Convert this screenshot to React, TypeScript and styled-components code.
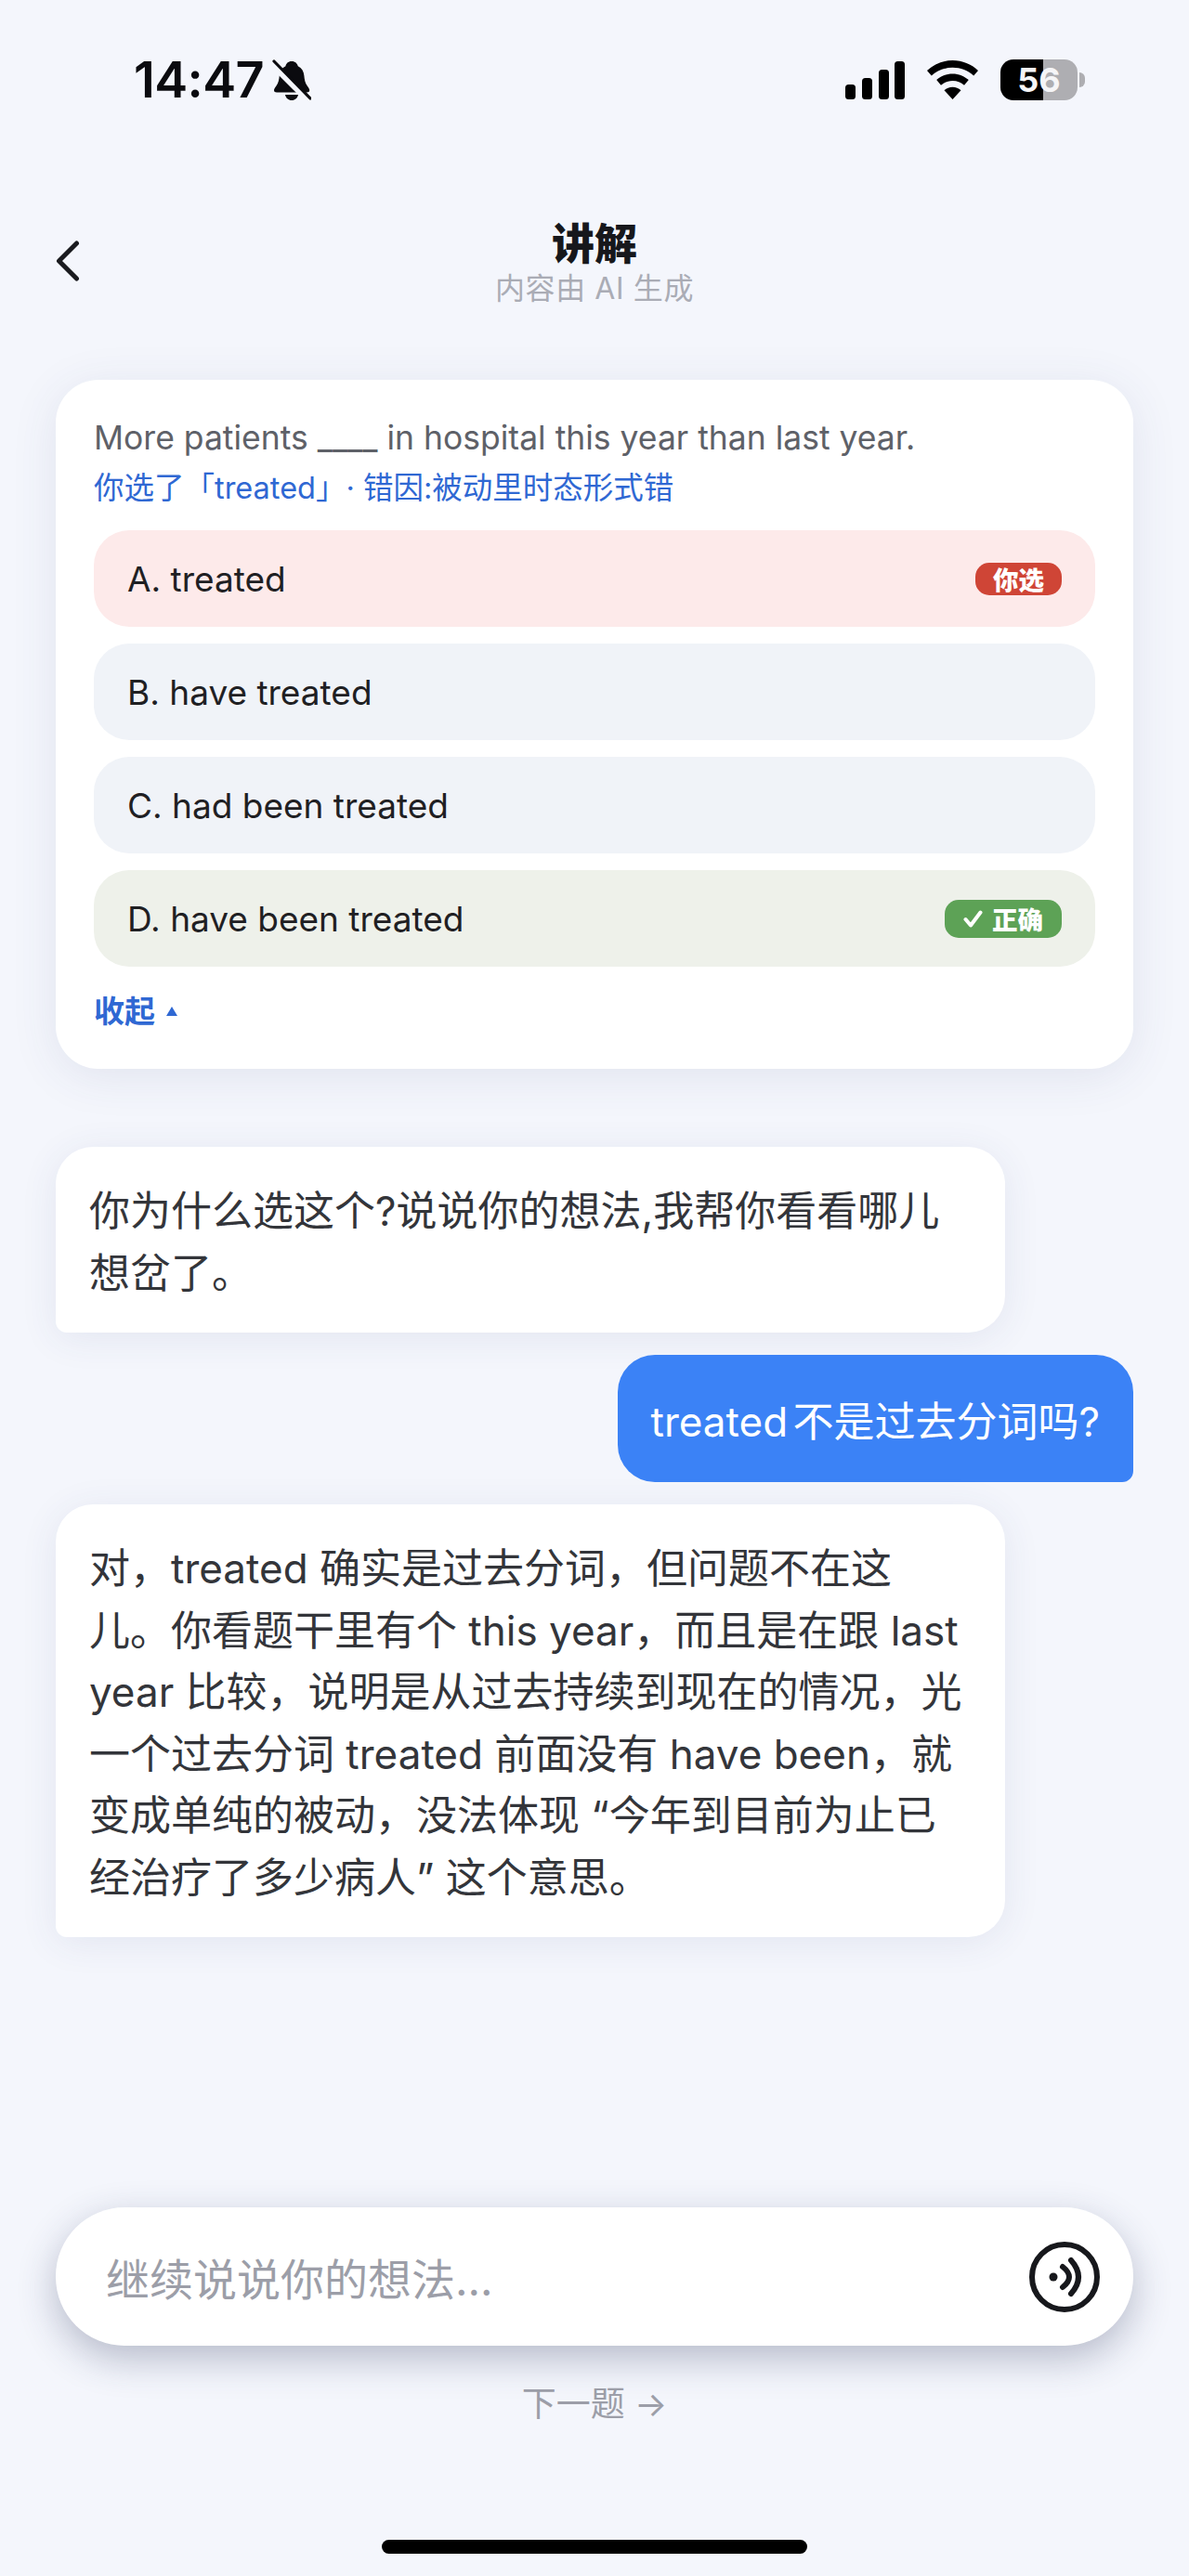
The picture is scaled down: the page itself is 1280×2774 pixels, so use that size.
import React from "react";
import styled, { createGlobalStyle } from "styled-components";

const Global = createGlobalStyle`
  html, body { margin: 0; padding: 0; background: #f4f6fc; }
  body { font-family: Inter, "Noto Sans CJK SC", sans-serif; -webkit-font-smoothing: antialiased; }
`;

const Page = styled.div`
  width: 1280px;
  height: 2774px;
  background: #f4f6fc;
  display: flex;
  flex-direction: column;
  overflow: hidden;
`;

const StatusBar = styled.div`
  height: 44px;
  margin-top: 64px;
  padding: 0 112px 0 144px;
  display: flex;
  align-items: center;
  justify-content: space-between;
`;
const StatusLeft = styled.div`
  display: flex;
  align-items: center;
  gap: 9px;
`;
const Time = styled.span`
  font-family: Inter, sans-serif;
  font-size: 54px;
  font-weight: 600;
  line-height: 44px;
  letter-spacing: -0.6px;
  color: #0b0b0f;
`;
const StatusRight = styled.div`
  display: flex;
  align-items: center;
  gap: 23px;
`;
const BatteryWrap = styled.div`
  display: flex;
  align-items: center;
  gap: 2px;
`;
const BatteryBody = styled.div<{ $level: number }>`
  width: 83px;
  height: 44px;
  border-radius: 14px;
  background: linear-gradient(90deg, #000 ${(p) => p.$level}%, #aeaeb2 ${(p) => p.$level}%);
  color: #f5f5f7;
  font-family: Inter, sans-serif;
  font-size: 36px;
  font-weight: 700;
  display: flex;
  align-items: center;
  justify-content: center;
`;
const BatteryNub = styled.div`
  width: 6px;
  height: 16px;
  background: #aeaeb2;
  border-radius: 0 6px 6px 0;
`;

const Header = styled.header`
  margin-top: 124px;
  padding: 0 60px;
  display: grid;
  grid-template-columns: 1fr auto 1fr;
  align-items: center;
`;
const BackButton = styled.div`
  display: flex;
  align-items: center;
`;
const TitleBlock = styled.div`
  display: flex;
  flex-direction: column;
  align-items: center;
`;
const Title = styled.h1`
  margin: 0;
  font-size: 46px;
  font-weight: 900;
  line-height: 60px;
  color: #17181c;
`;
const Subtitle = styled.div`
  font-size: 32px;
  line-height: 38px;
  color: #aaacb5;
  letter-spacing: 0.6px;
`;

const Card = styled.section`
  margin: 79px 60px 0;
  padding: 40px 41px 0;
  height: 742px;
  box-sizing: border-box;
  background: #fff;
  border-radius: 46px;
  box-shadow: 0 8px 50px rgba(60, 70, 120, 0.1);
`;
const Question = styled.div`
  font-size: 35.5px;
  line-height: 46px;
  color: #5e6168;
`;
const Reason = styled.div`
  margin-top: 8px;
  font-size: 32.5px;
  line-height: 46px;
  color: #2f68d3;
  white-space: nowrap;
  text-spacing-trim: space-all;
`;
const Options = styled.div`
  margin-top: 22px;
  display: flex;
  flex-direction: column;
  gap: 18px;
`;
const Option = styled.div<{ $bg: string }>`
  height: 104px;
  padding: 0 36px;
  border-radius: 38px;
  background: ${(p) => p.$bg};
  display: flex;
  align-items: center;
  justify-content: space-between;
  font-size: 37px;
  color: #1f2023;
`;
const Badge = styled.span<{ $bg: string; $height: number; $pad: number }>`
  height: ${(p) => p.$height}px;
  padding: 0 ${(p) => p.$pad}px;
  border-radius: 15px;
  background: ${(p) => p.$bg};
  color: #fff;
  font-size: 27.5px;
  font-weight: 900;
  display: flex;
  align-items: center;
  gap: 10px;
`;
const Collapse = styled.div`
  margin-top: 26px;
  display: flex;
  align-items: center;
  gap: 12px;
  font-size: 33px;
  line-height: 44px;
  font-weight: 700;
  color: #2f68d3;
`;

const Chat = styled.div`
  margin-top: 84px;
  padding: 0 60px;
  display: flex;
  flex-direction: column;
  gap: 24px;
`;
const BotBubble = styled.div`
  box-sizing: border-box;
  width: 1022px;
  padding: 36px 36px 31px;
  background: #fff;
  border-radius: 40px 40px 40px 12px;
  box-shadow: 0 6px 40px rgba(60, 70, 120, 0.09);
  font-size: 44px;
  line-height: 66.5px;
  color: #33353a;
`;
const UserBubble = styled.div`
  align-self: flex-end;
  box-sizing: border-box;
  height: 137px;
  padding: 0 36px;
  background: #3b82f6;
  border-radius: 40px 40px 12px 40px;
  font-size: 44px;
  word-spacing: -7px;
  color: #fff;
  display: flex;
  align-items: center;
`;

const Bottom = styled.div`
  margin-top: auto;
  padding: 0 60px;
  display: flex;
  flex-direction: column;
  align-items: center;
`;
const InputBar = styled.div`
  align-self: stretch;
  height: 149px;
  box-sizing: border-box;
  padding: 0 36px 0 54px;
  background: #fff;
  border-radius: 74px;
  box-shadow: 0 14px 40px rgba(40, 50, 90, 0.3);
  display: flex;
  align-items: center;
  justify-content: space-between;
`;
const Placeholder = styled.span`
  font-size: 47px;
  color: #9c9ea8;
`;
const NextLink = styled.div`
  margin-top: 38px;
  font-size: 37px;
  line-height: 50px;
  color: #9c9ea8;
  display: flex;
  align-items: center;
  gap: 10px;
`;
const HomeBar = styled.div`
  margin-top: 121px;
  margin-bottom: 24px;
  width: 458px;
  height: 15px;
  border-radius: 8px;
  background: #000;
`;

const Wifi = () => (
  <svg width="57" height="42" viewBox="0 0 57 42" fill="#000">
    <path d="M28.5 0C18 0 8.3 4 1 11l4.8 5.6C11.8 11 19.8 7.8 28.5 7.8S45.2 11 51.2 16.6L56 11C48.7 4 39 0 28.5 0Z" />
    <path d="M28.5 14.4c-6.6 0-12.7 2.5-17.3 6.7l4.8 5.6c3.3-3 7.7-4.8 12.5-4.8s9.2 1.8 12.5 4.8l4.8-5.6c-4.6-4.2-10.7-6.7-17.3-6.7Z" />
    <path d="M28.5 28.8c-3.4 0-6.6 1.2-9 3.4L28.5 42l9-9.8c-2.4-2.2-5.6-3.4-9-3.4Z" />
  </svg>
);

const Signal = () => (
  <svg width="64" height="41" viewBox="0 0 64 41" fill="#000">
    <rect x="0" y="25" width="11" height="16" rx="3.5" />
    <rect x="18" y="18" width="11" height="23" rx="3.5" />
    <rect x="36" y="9" width="11" height="32" rx="3.5" />
    <rect x="53" y="0" width="11" height="41" rx="3.5" />
  </svg>
);

const BellOff = () => (
  <svg width="42" height="44" viewBox="0 0 42 44" fill="#0b0b0f">
    <path d="M21 2c4 0 6 2.6 6.8 5.2 4 1.8 6.2 5.4 6.6 10.3.3 3.8 1 7.800 3.400 11 1.600 2.200 2.400 3.400 2.400 4.800 0 1.600-1.200 2.200-3 2.200H5c-1.800 0-3-.6-3-2.200 0-1.400.8-2.600 2.400-4.800 2.400-3.200 3.100-7.200 3.400-11 .4-4.900 2.600-8.500 6.600-10.300C15 4.600 17 2 21 2Z" />
    <path d="M14 38h14c-.6 3.400-3.400 6-7 6s-6.400-2.600-7-6Z" />
    <path d="M1 6 38 43" stroke="#f4f6fc" strokeWidth="7" />
    <path d="M2 2 41 42" stroke="#0b0b0f" strokeWidth="3.200" strokeLinecap="round" />
  </svg>
);

const Back = () => (
  <svg width="26" height="44" viewBox="0 0 26 44" fill="none" stroke="#1a1b1f" strokeWidth="5" strokeLinecap="round" strokeLinejoin="round">
    <path d="M22.500 3 3.500 22l19 19" />
  </svg>
);

const Voice = () => (
  <svg width="76" height="76" viewBox="0 0 76 76" fill="none" stroke="#17181c" strokeWidth="6" strokeLinecap="round">
    <circle cx="38" cy="38" r="35" />
    <circle cx="26" cy="38" r="4.500" fill="#17181c" stroke="none" />
    <path d="M36 27Q50 38 36 49" />
    <path d="M45 20Q61 38 45 56" />
  </svg>
);

const Check = () => (
  <svg width="21" height="19" viewBox="0 0 21 19" fill="none" stroke="#fff" strokeWidth="4" strokeLinecap="round" strokeLinejoin="round">
    <path d="M2.500 10 8 16.500 18.500 2.500" />
  </svg>
);

const Triangle = () => (
  <svg width="12" height="10" viewBox="0 0 12 10" fill="#2f68d3">
    <path d="M6 0 12 10H0Z" />
  </svg>
);

export default function App() {
  return (
    <Page>
      <Global />
      <StatusBar>
        <StatusLeft>
          <Time>14:47</Time>
          <BellOff />
        </StatusLeft>
        <StatusRight>
          <Signal />
          <Wifi />
          <BatteryWrap>
            <BatteryBody $level={56}>56</BatteryBody>
            <BatteryNub />
          </BatteryWrap>
        </StatusRight>
      </StatusBar>
      <Header>
        <BackButton>
          <Back />
        </BackButton>
        <TitleBlock>
          <Title>讲解</Title>
          <Subtitle>内容由 AI 生成</Subtitle>
        </TitleBlock>
      </Header>
      <Card>
        <Question>More patients ____ in hospital this year than last year.</Question>
        <Reason>你选了「treated」· 错因:被动里时态形式错</Reason>
        <Options>
          <Option $bg="#fdeaea">
            A. treated
            <Badge $bg="#cf4536" $height={35} $pad={19}>你选</Badge>
          </Option>
          <Option $bg="#f0f3f8">B. have treated</Option>
          <Option $bg="#f0f3f8">C. had been treated</Option>
          <Option $bg="#eef1ea">
            D. have been treated
            <Badge $bg="#5da256" $height={41} $pad={20}>
              <Check />
              正确
            </Badge>
          </Option>
        </Options>
        <Collapse>
          收起
          <Triangle />
        </Collapse>
      </Card>
      <Chat>
        <BotBubble>你为什么选这个?说说你的想法,我帮你看看哪儿想岔了。</BotBubble>
        <UserBubble>treated 不是过去分词吗?</UserBubble>
        <BotBubble>
          对，treated 确实是过去分词，但问题不在这儿。你看题干里有个 this year，而且是在跟 last year 比较，说明是从过去持续到现在的情况，光一个过去分词 treated 前面没有 have been，就变成单纯的被动，没法体现 “今年到目前为止已经治疗了多少病人” 这个意思。
        </BotBubble>
      </Chat>
      <Bottom>
        <InputBar>
          <Placeholder>继续说说你的想法...</Placeholder>
          <Voice />
        </InputBar>
        <NextLink>下一题 →</NextLink>
        <HomeBar />
      </Bottom>
    </Page>
  );
}
